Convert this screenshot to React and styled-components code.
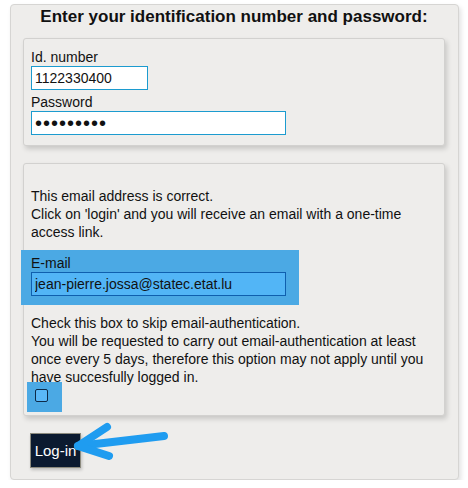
import React from 'react';
import styled, {createGlobalStyle} from 'styled-components';

const GlobalStyle = createGlobalStyle`
  body {
    margin: 0;
    background: #fff;
    font-family: "Liberation Sans", Arial, sans-serif;
    color: #111;
  }
  * { box-sizing: border-box; }
`;

const Panel = styled.div`
  margin: 4px 0 0 10px;
  width: 449px;
  padding: 2px 13px 11px 12px;
  background: #eeedeb;
  border: 1px solid #d6d5d3;
  border-radius: 4px;
  box-shadow: 2px 3px 5px rgba(0, 0, 0, 0.12);
`;

const Title = styled.h1`
  margin: 0 0 11px;
  font-size: 17px;
  line-height: 20px;
  font-weight: bold;
  text-align: center;
`;

const Box = styled.div`
  border: 1px solid #d2d1cf;
  border-radius: 3px;
  background: #eeedeb;
  box-shadow: 2px 3px 5px rgba(0, 0, 0, 0.16);
  padding: ${p => p.$top || 9}px 8px ${p => p.$bottom || 10}px 7px;
  margin-bottom: ${p => p.$gap || 0}px;
  font-size: 14px;
  line-height: 18px;
`;

const Label = styled.label`
  display: block;
  font-size: 14px;
  line-height: 17px;
`;

const Input = styled.input`
  display: block;
  width: ${p => p.$width}px;
  height: 24px;
  margin: 0 0 ${p => p.$gap || 0}px;
  padding: 0 3px;
  border: 1px solid #1c9bcf;
  background: #fff;
  font-family: "Liberation Sans", Arial, sans-serif;
  font-size: 14px;
  color: #111;
  outline: none;
`;

const Secret = styled(Input)`
  font-size: 20px;
  letter-spacing: 1px;
`;

const Text = styled.p`
  margin: ${p => p.$top || 0}px 0 0;
`;

const Highlight = styled.div`
  margin: 9px 0 0 -10px;
  width: 278px;
  padding: 5px 10px 9px;
  background: #4ba9e4;
`;

const EmailInput = styled(Input)`
  background: #52b5f6;
  border-color: #0f5fae;
`;

const CheckSpot = styled.div`
  margin: -4px 0 0 -4px;
  width: 35px;
  height: 30px;
  padding: 7px 0 0 8px;
  background: #4ba9e4;
`;

const Check = styled.span`
  display: block;
  width: 13px;
  height: 13px;
  border: 1px solid #0d2a48;
  border-radius: 2px;
  background: #5ab8f7;
`;

const Actions = styled.div`
  position: relative;
  margin: 17px 0 0 7px;
  height: 35px;
`;

const Button = styled.button`
  width: 51px;
  height: 35px;
  padding: 0;
  background: #0b1a30;
  border: 1px solid #8c8a7e;
  color: #fff;
  font-family: "Liberation Sans", Arial, sans-serif;
  font-size: 15px;
  box-shadow: 1px 2px 3px rgba(0, 0, 0, 0.2);
`;

const Arrow = styled.svg`
  position: absolute;
  left: 42px;
  top: -12px;
  overflow: visible;
`;

export default function App() {
  return (
    <>
      <GlobalStyle/>
      <Panel>
        <Title>Enter your identification number and password:</Title>
        <Box $gap={17} $top={10} $bottom={10}>
          <Label>Id. number</Label>
          <Input $width={117} $gap={4} defaultValue="1122330400"/>
          <Label>Password</Label>
          <Secret as="input" type="password" $width={255} defaultValue="secret123"/>
        </Box>
        <Box $top={23} $bottom={3}>
          <Text>This email address is correct.</Text>
          <Text>Click on 'login' and you will receive an email with a one-time access link.</Text>
          <Highlight>
            <Label>E-mail</Label>
            <EmailInput $width={255} defaultValue="jean-pierre.jossa@statec.etat.lu"/>
          </Highlight>
          <Text $top={9}>Check this box to skip email-authentication.</Text>
          <Text>You will be requested to carry out email-authentication at least once every 5 days, therefore this option may not apply until you have succesfully logged in.</Text>
          <CheckSpot>
            <Check/>
          </CheckSpot>
        </Box>
        <Actions>
          <Button>Log-in</Button>
          <Arrow width="100" height="40" viewBox="0 0 100 40">
            <g fill="none" stroke="#1f9cf0" strokeWidth="8" strokeLinecap="round" strokeLinejoin="round">
              <path d="M92 15 L6 25"/>
              <path d="M35 6 L6 25 L37 35"/>
            </g>
          </Arrow>
        </Actions>
      </Panel>
    </>
  );
}
